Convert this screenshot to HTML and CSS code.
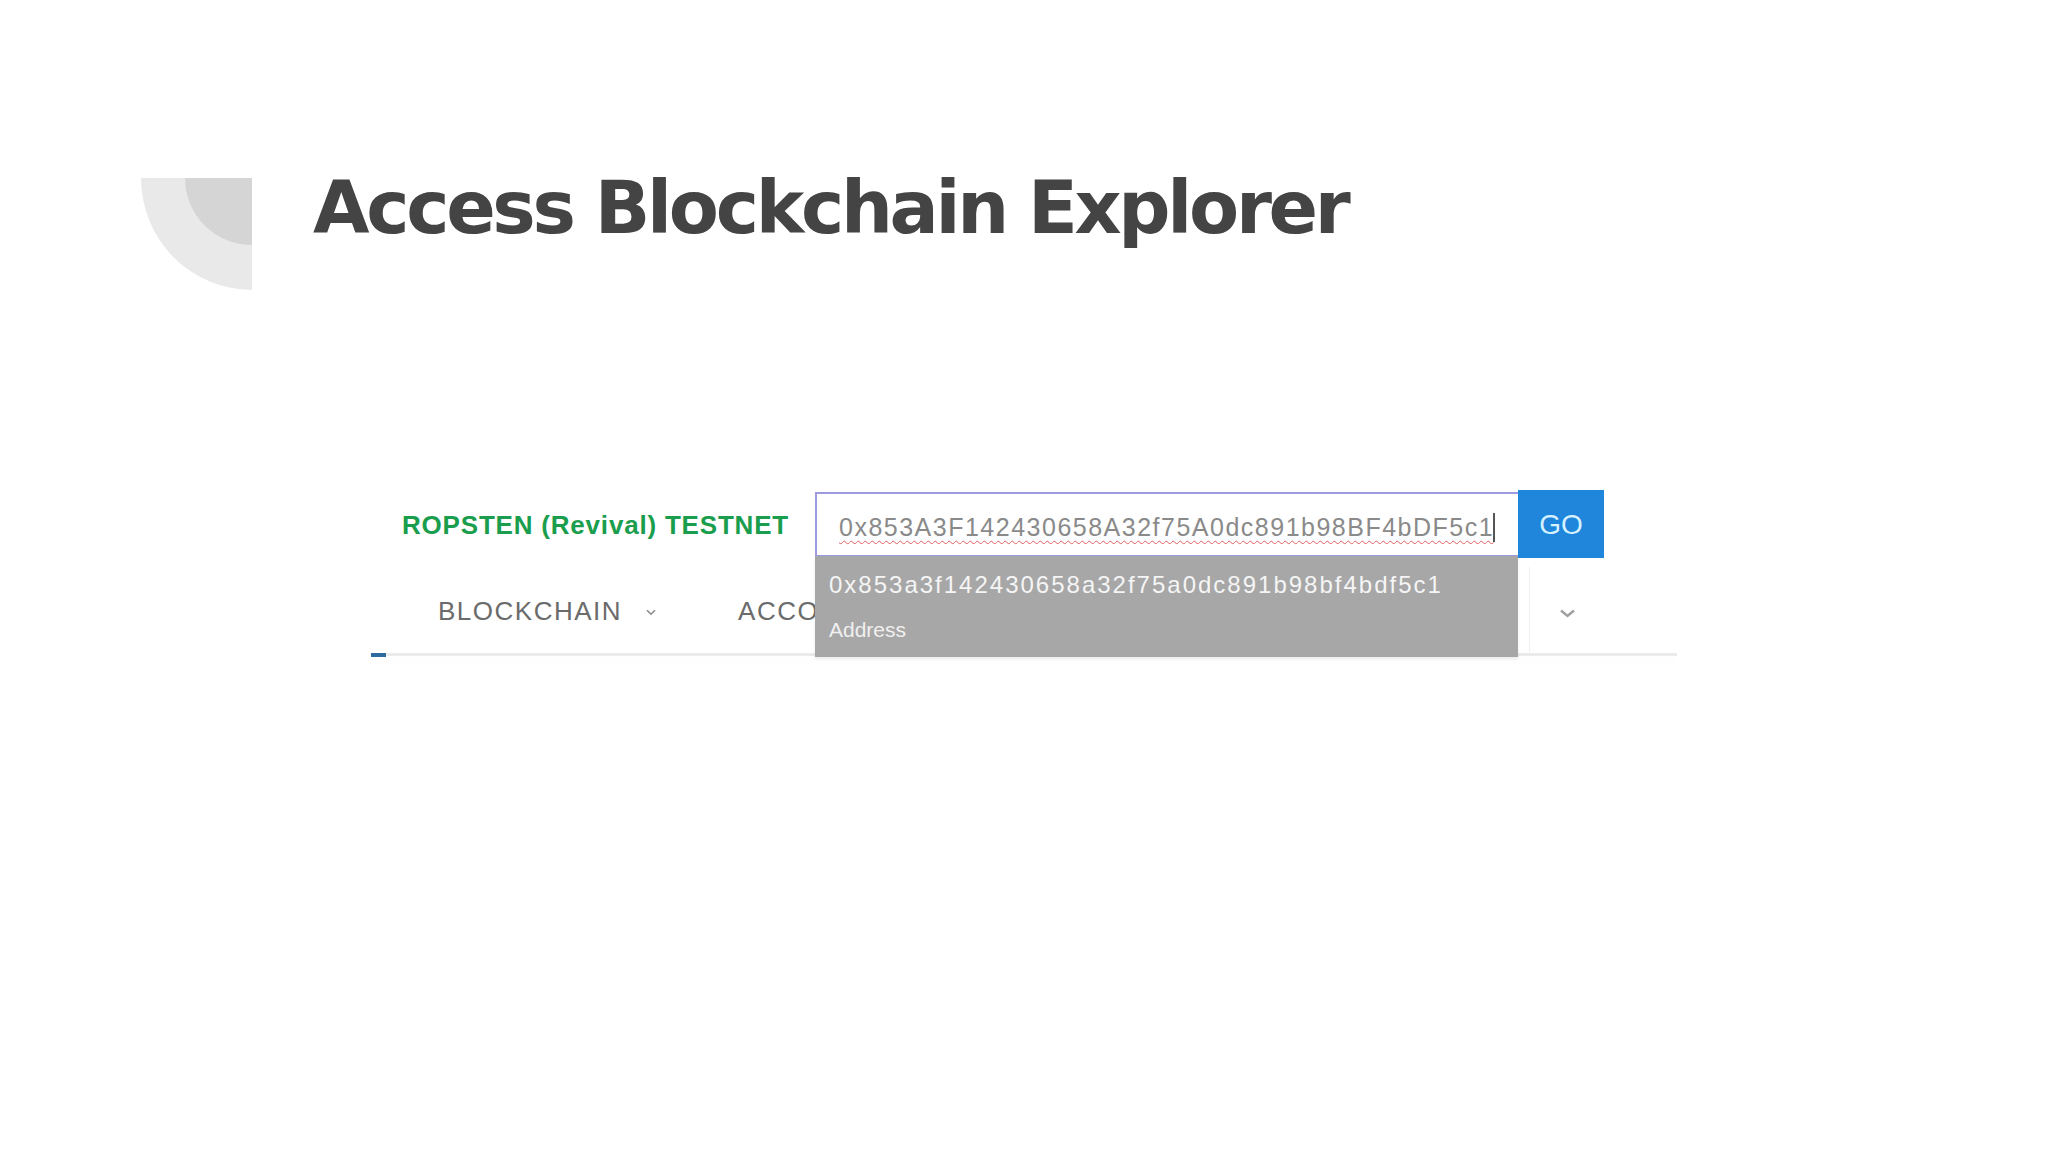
FILE: index.html
```html
<!DOCTYPE html>
<html lang="en">
<head>
<meta charset="utf-8">
<title>Access Blockchain Explorer</title>
<link rel="stylesheet" href="styles.css">
</head>
<body>
<div class="page">
  <header class="head">
    <div class="deco"><div class="deco-inner"></div></div>
    <h1 class="title">Access Blockchain Explorer</h1>
  </header>

  <section class="shot">
    <div class="topbar">
      <span class="net">ROPSTEN (Revival) TESTNET</span>
      <div class="search">
        <div class="field"><span class="typed">0x853A3F142430658A32f75A0dc891b98BF4bDF5c1</span><span class="caret"></span></div>
        <div class="go">GO</div>
        <div class="suggest">
          <div class="sug-addr">0x853a3f142430658a32f75a0dc891b98bf4bdf5c1</div>
          <div class="sug-type">Address</div>
        </div>
      </div>
    </div>

    <nav class="nav">
      <div class="nav-item">BLOCKCHAIN
        <svg class="chev" viewBox="0 0 10 7" width="10" height="7"><path d="M1 1.2 5 5.2 9 1.2" fill="none" stroke="#8a8a8a" stroke-width="1.6"/></svg>
      </div>
      <div class="nav-item">ACCOUNTS</div>
      <div class="nav-more">
        <svg class="chev-lg" viewBox="0 0 17 9" width="17" height="9"><path d="M2 1.5 8.5 7 15 1.5" fill="none" stroke="#a0a0a0" stroke-width="2.4"/></svg>
      </div>
    </nav>
    <div class="navline"><span class="indicator"></span></div>
  </section>
</div>
</body>
</html>
```

FILE: styles.css
```css
html, body {
  margin: 0;
  padding: 0;
  background: #ffffff;
}

.page {
  width: 2048px;
  height: 1152px;
  overflow: hidden;
}

/* ---------- heading ---------- */
.head {
  display: flex;
  align-items: flex-start;
  padding: 178px 0 0 141px;
}

.deco {
  width: 111px;
  height: 112px;
  background: #e9e9e9;
  border-bottom-left-radius: 100%;
  display: flex;
  justify-content: flex-end;
  flex: 0 0 auto;
}

.deco-inner {
  width: 67px;
  height: 67px;
  background: #d5d5d5;
  border-bottom-left-radius: 100%;
}

.title {
  margin: -7px 0 0 61px;
  font-family: "DejaVu Sans", "Liberation Sans", sans-serif;
  font-weight: 700;
  font-size: 73px;
  line-height: 73px;
  letter-spacing: -3.3px;
  color: #444444;
  white-space: nowrap;
}

/* ---------- embedded screenshot ---------- */
.shot {
  margin: 200px 0 0 372px;
  width: 1305px;
  font-family: "Liberation Sans", Arial, sans-serif;
}

.topbar {
  display: flex;
  align-items: center;
  height: 68px;
  padding-left: 30px;
}

.net {
  flex: 0 0 413px;
  font-weight: 700;
  font-size: 26px;
  letter-spacing: 0.8px;
  color: #1a9e4e;
  white-space: nowrap;
  padding-top: 3px;
}

.search {
  position: relative;
  display: flex;
  align-items: center;
}

.field {
  box-sizing: border-box;
  width: 703px;
  height: 65px;
  border: 2px solid #9c9be0;
  border-right: none;
  padding: 6px 0 0 22px;
  display: flex;
  align-items: center;
  overflow: hidden;
  white-space: nowrap;
  background: #ffffff;
}

.typed {
  font-size: 25px;
  letter-spacing: 1.5px;
  color: #8a8a8a;
  text-decoration: underline wavy #e06060;
  text-decoration-thickness: 1px;
  text-underline-offset: 4px;
}

.caret {
  display: inline-block;
  width: 0;
  height: 29px;
  border-left: 2px solid #555555;
  margin-left: -1px;
}

.go {
  box-sizing: border-box;
  width: 86px;
  height: 68px;
  background: #1f86dc;
  color: #d6f1ff;
  font-size: 28px;
  display: flex;
  align-items: center;
  justify-content: center;
  padding-top: 2px;
}

/* autocomplete menu lies over the nav row */
.suggest {
  position: absolute;
  left: 0;
  top: 66px;
  box-sizing: border-box;
  width: 703px;
  height: 101px;
  background: #a7a7a7;
  padding: 14px 0 0 14px;
  box-shadow: 0 2px 3px rgba(0, 0, 0, 0.08);
  z-index: 2;
}

.sug-addr {
  font-size: 24px;
  line-height: 30px;
  letter-spacing: 2px;
  color: #f5f5f5;
  white-space: nowrap;
}

.sug-type {
  margin-top: 17px;
  font-size: 21px;
  line-height: 26px;
  color: #f0f0f0;
}

/* ---------- nav ---------- */
.nav {
  box-sizing: border-box;
  height: 94px;
  padding: 12px 0 0 66px;
  display: flex;
  align-items: center;
}

.nav-item {
  display: flex;
  align-items: center;
  gap: 24px;
  margin-right: 82px;
  font-size: 26px;
  letter-spacing: 1.5px;
  color: #6b6b6b;
  white-space: nowrap;
}

.chev {
  display: block;
  margin-top: 2px;
}

.nav-more {
  margin-left: auto;
  align-self: stretch;
  margin-top: -3px;
  box-sizing: border-box;
  width: 148px;
  border-left: 1px solid #efefef;
  padding-left: 29px;
  display: flex;
  align-items: center;
}

.chev-lg {
  display: block;
  margin-top: 8px;
}

.navline {
  height: 3px;
  margin-top: 1px;
  background: #ebebeb;
  box-shadow: 0 6px 10px rgba(0, 0, 0, 0.025);
}

.indicator {
  display: block;
  width: 15px;
  height: 4px;
  margin-left: -1px;
  background: #2c6aa0;
}
```
